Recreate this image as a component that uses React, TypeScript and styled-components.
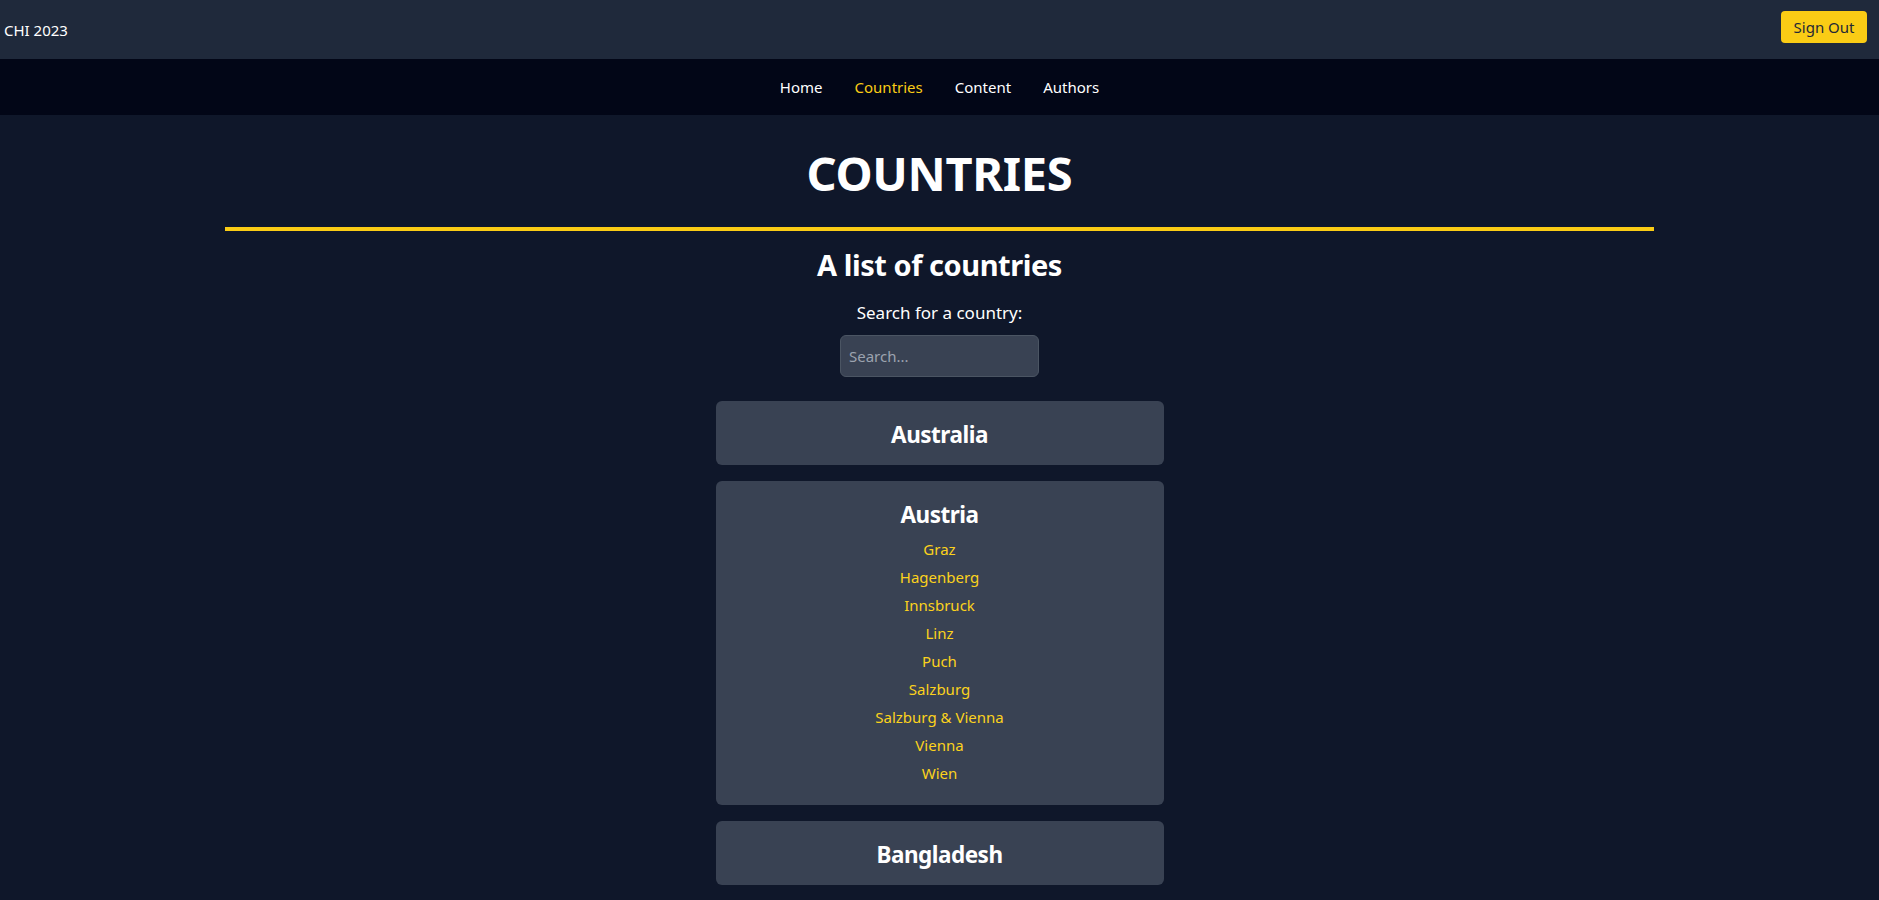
import styled, { createGlobalStyle } from 'styled-components'

const GlobalStyle = createGlobalStyle`
  body {
    margin: 0;
    background-color: #0f172a;
    font-family: "Noto Sans", "Open Sans", sans-serif;
    color: #ffffff;
  }
`

const Header = styled.header`
  height: 59px;
  background-color: #1f293b;
  display: flex;
  align-items: center;
  justify-content: space-between;
  padding: 0 12px 0 4px;
`
const Brand = styled.span`
  font-size: 15px;
  color: #ffffff;
`
const SignOutButton = styled.button`
  align-self: flex-start;
  margin-top: 11px;
  font: inherit;
  font-size: 15px;
  line-height: 24px;
  cursor: pointer;
  background-color: #facc15;
  color: #1f2937;
  border: none;
  border-radius: 4px;
  padding: 4px 12px;
  width: 86px;
`
const Nav = styled.nav`
  height: 56px;
  background-color: #020617;
  display: flex;
  align-items: center;
  justify-content: center;
  gap: 32px;
`
const NavLink = styled.a<{ $active?: boolean }>`
  font-size: 15px;
  line-height: 24px;
  color: ${(p) => (p.$active ? '#facc15' : '#ffffff')};
  text-decoration: none;
  cursor: pointer;
`
const Main = styled.main`
  display: flex;
  flex-direction: column;
  align-items: center;
  padding: 34px 0 40px;
`
const PageTitle = styled.h1`
  margin: 0;
  font-size: 47px;
  line-height: 48px;
  font-weight: 700;
  letter-spacing: -0.3px;
`
const Divider = styled.hr`
  width: 76%;
  height: 4px;
  border: none;
  background-color: #facc15;
  margin: 30px 0 16px;
`
const Subtitle = styled.h2`
  margin: 0;
  font-size: 29px;
  line-height: 36px;
  font-weight: 700;
  letter-spacing: -0.45px;
`
const SearchLabel = styled.label`
  margin-top: 16px;
  font-size: 17px;
  line-height: 28px;
`
const SearchInput = styled.input`
  margin-top: 8px;
  box-sizing: border-box;
  width: 199px;
  height: 42px;
  padding: 0 8px;
  font: inherit;
  font-size: 15px;
  color: #ffffff;
  background-color: #394253;
  border: 1px solid #4b5563;
  border-radius: 6px;
  &::placeholder {
    color: #9ca3af;
  }
`
const List = styled.div`
  margin-top: 24px;
  width: 448px;
  display: flex;
  flex-direction: column;
  gap: 16px;
`
const Card = styled.div<{ $hasCities?: boolean }>`
  background-color: #394253;
  border-radius: 6px;
  padding: 18px 16px ${(p) => (p.$hasCities ? '18px' : '14px')};
  text-align: center;
`
const CountryName = styled.h3<{ $hasCities?: boolean }>`
  margin: 0 0 ${(p) => (p.$hasCities ? '4px' : '0')};
  font-size: 22.5px;
  line-height: 32px;
  font-weight: 700;
  letter-spacing: -0.5px;
`
const City = styled.div`
  font-size: 15px;
  line-height: 24px;
  padding: 2px 0;
  color: #fcd21c;
`

const countries = [
  { name: 'Australia', cities: [] as string[] },
  {
    name: 'Austria',
    cities: ['Graz', 'Hagenberg', 'Innsbruck', 'Linz', 'Puch', 'Salzburg', 'Salzburg & Vienna', 'Vienna', 'Wien'],
  },
  { name: 'Bangladesh', cities: [] as string[] },
]

export default function App() {
  return (
    <>
      <GlobalStyle />
      <Header>
        <Brand>CHI 2023</Brand>
        <SignOutButton>Sign Out</SignOutButton>
      </Header>
      <Nav>
        <NavLink>Home</NavLink>
        <NavLink $active>Countries</NavLink>
        <NavLink>Content</NavLink>
        <NavLink>Authors</NavLink>
      </Nav>
      <Main>
        <PageTitle>COUNTRIES</PageTitle>
        <Divider />
        <Subtitle>A list of countries</Subtitle>
        <SearchLabel htmlFor="search">Search for a country:</SearchLabel>
        <SearchInput id="search" type="text" placeholder="Search..." />
        <List>
          {countries.map((c) => (
            <Card key={c.name} $hasCities={c.cities.length > 0}>
              <CountryName $hasCities={c.cities.length > 0}>{c.name}</CountryName>
              {c.cities.map((city) => (
                <City key={city}>{city}</City>
              ))}
            </Card>
          ))}
        </List>
      </Main>
    </>
  )
}
